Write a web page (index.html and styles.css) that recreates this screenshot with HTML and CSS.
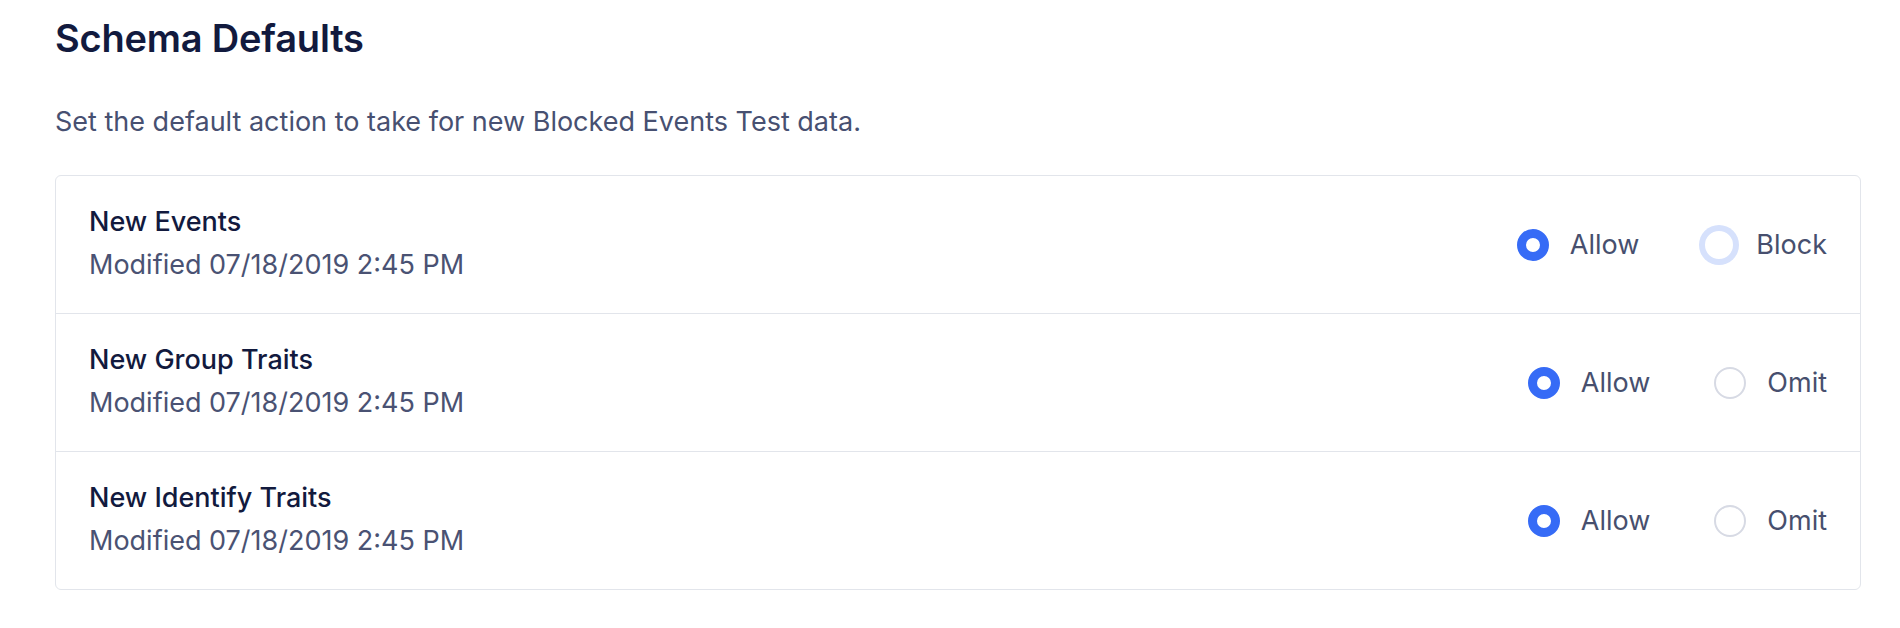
FILE: index.html
```html
<!DOCTYPE html>
<html lang="en">
<head>
<meta charset="utf-8">
<title>Schema Defaults</title>
<link rel="stylesheet" href="styles.css">
</head>
<body>
<main class="page">
  <h1 class="title">Schema Defaults</h1>
  <p class="subtitle">Set the default action to take for new Blocked Events Test data.</p>
  <div class="card">
    <div class="row">
      <div class="info">
        <div class="name">New Events</div>
        <div class="meta">Modified 07/18/2019 2:45 PM</div>
      </div>
      <div class="options">
        <label class="option"><span class="radio checked"></span><span class="label">Allow</span></label>
        <label class="option"><span class="radio focus"></span><span class="label">Block</span></label>
      </div>
    </div>
    <div class="row">
      <div class="info">
        <div class="name">New Group Traits</div>
        <div class="meta">Modified 07/18/2019 2:45 PM</div>
      </div>
      <div class="options">
        <label class="option"><span class="radio checked"></span><span class="label">Allow</span></label>
        <label class="option"><span class="radio"></span><span class="label">Omit</span></label>
      </div>
    </div>
    <div class="row">
      <div class="info">
        <div class="name">New Identify Traits</div>
        <div class="meta">Modified 07/18/2019 2:45 PM</div>
      </div>
      <div class="options">
        <label class="option"><span class="radio checked"></span><span class="label">Allow</span></label>
        <label class="option"><span class="radio"></span><span class="label">Omit</span></label>
      </div>
    </div>
  </div>
</main>
</body>
</html>
```
FILE: styles.css
```css
* { box-sizing: border-box; }
html, body { margin: 0; padding: 0; background: #ffffff; }
body {
  font-family: Inter, "Noto Sans", "Liberation Sans", sans-serif;
  color: #121a3e;
}
.page {
  padding: 16px 39px 0 55px;
}
.title {
  margin: 0;
  font-size: 38px;
  line-height: 44px;
  font-weight: 600;
  color: #121a3e;
  letter-spacing: -0.2px;
}
.subtitle {
  margin: 44px 0 0;
  font-size: 27px;
  line-height: 36px;
  color: #475071;
}
.card {
  margin-top: 35px;
  border: 1px solid #e2e5eb;
  border-radius: 6px;
}
.row {
  height: 137px;
  display: flex;
  align-items: center;
  justify-content: space-between;
  padding: 0 33px 0 33px;
}
.row + .row {
  border-top: 1px solid #e2e5eb;
  height: 138px;
}
.info {
  display: flex;
  flex-direction: column;
  padding-bottom: 4px;
}
.name {
  font-size: 27px;
  line-height: 43px;
  font-weight: 500;
  color: #121a3e;
}
.meta {
  font-size: 27px;
  line-height: 43px;
  color: #4a5273;
}
.options {
  display: flex;
  align-items: center;
  gap: 64px;
}
.option {
  display: flex;
  align-items: center;
  gap: 21px;
}
.radio {
  width: 32px;
  height: 32px;
  border-radius: 50%;
  border: 2px solid #d7dae4;
  background: #fff;
}
.radio.checked {
  border: 9px solid #366bf6;
}
.radio.focus {
  border-color: #d6e1fc;
  box-shadow: 0 0 0 4px #d6e1fc;
}
.label {
  font-size: 27px;
  line-height: 36px;
  color: #474f6e;
}
```
